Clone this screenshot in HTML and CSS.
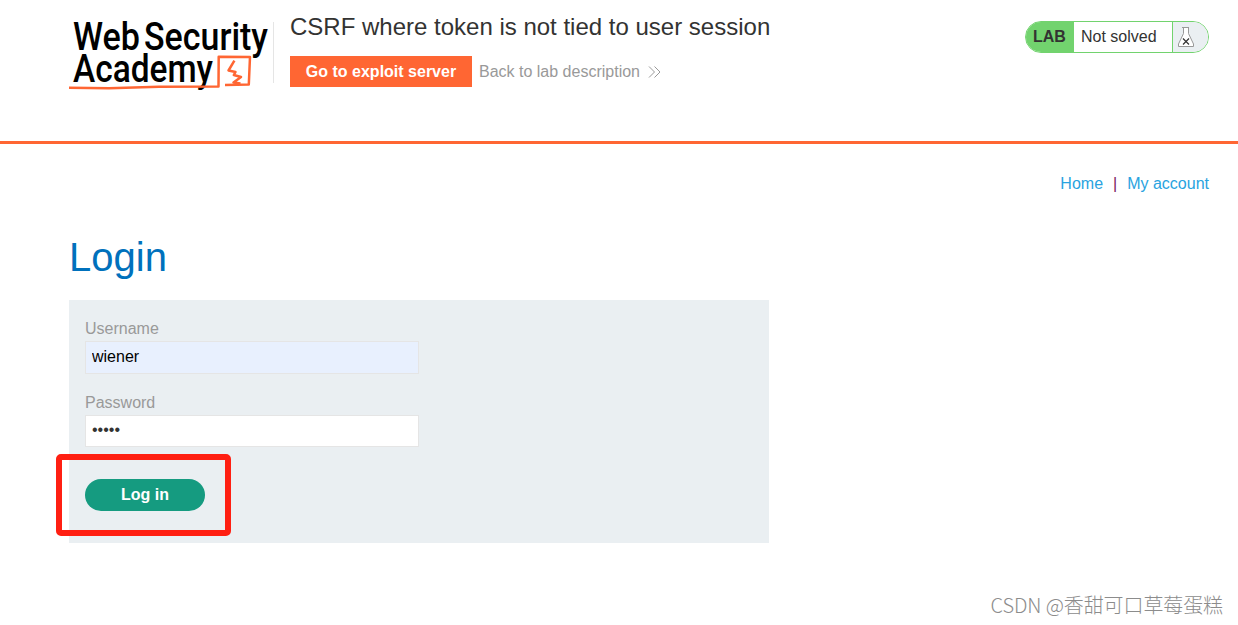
FILE: index.html
```html
<!DOCTYPE html>
<html lang="en">
<head>
    <meta charset="UTF-8">
    <meta name="viewport" content="width=device-width, initial-scale=1.0">
    <title>CSRF where token is not tied to user session</title>
    <link rel="stylesheet" href="styles.css">
</head>
<body>
    <header class="lab-header">
        <div class="container header-row">
            <svg class="logo" width="204" height="76" viewBox="0 0 204 76">
                <g class="logo-text">
                    <text x="4" y="35" textLength="67" lengthAdjust="spacingAndGlyphs">Web</text>
                    <text x="75" y="35" textLength="124" lengthAdjust="spacingAndGlyphs">Security</text>
                    <text x="4" y="67" textLength="140" lengthAdjust="spacingAndGlyphs">Academy</text>
                </g>
                <path class="logo-line" d="M0 72.700 L40 73.300 L90 71.800 L149.500 71.500 L149.700 41.800 L181 42 L179.800 69.500 L156 70"/>
                <path class="logo-bolt" d="M165.400 45.700 L159.500 55.500 L166.500 57 L164.800 60 L172 62 L164.500 67.500 L171.500 68.500"/>
            </svg>
            <div class="title-box">
                <h2>CSRF where token is not tied to user session</h2>
                <div class="links">
                    <a class="exploit-button">Go to exploit server</a>
                    <a class="back-link">Back to lab description
                        <svg width="13" height="12" viewBox="0 0 13 12">
                            <path d="M1 .5 L6.500 6 L1 11.500 M6.500 .5 L12 6 L6.500 11.500"/>
                        </svg>
                    </a>
                </div>
            </div>
            <div class="lab-status">
                <span class="lab-tag">LAB</span>
                <span class="lab-text">Not solved</span>
                <span class="lab-icon">
                    <svg width="18" height="22" viewBox="0 0 18 22">
                        <path class="flask" d="M5 1.500 H12 M6.500 1.500 V7.500 L1.500 18 V20.500 H16.500 V18 L11.500 7.500 V1.500"/>
                        <path class="cross" d="M6 12.500 L12 18.500 M12 12.500 L6 18.500"/>
                    </svg>
                </span>
            </div>
        </div>
    </header>

    <main class="container">
        <nav class="top-links">
            <a>Home</a><span>|</span><a>My account</a>
        </nav>
        <h1>Login</h1>
        <form class="login-form">
            <label for="username">Username</label>
            <input class="filled" type="text" id="username" value="wiener">
            <label for="password">Password</label>
            <input type="password" id="password" value="peter">
            <button type="button">Log in</button>
            <div class="highlight"></div>
        </form>
    </main>
    <div class="watermark">CSDN @香甜可口草莓蛋糕</div>
</body>
</html>
```
FILE: styles.css
```css
* {
    box-sizing: border-box;
}

body {
    margin: 0;
    height: 625px;
    position: relative;
    overflow: hidden;
    background-color: #fff;
    color: #333332;
    font-family: "Liberation Sans", Arial, sans-serif;
    font-size: 16px;
}

.container {
    width: 1140px;
    margin-left: 69px;
}

.lab-header {
    height: 144px;
    border-bottom: 3px solid #ff6633;
}

.header-row {
    display: flex;
    align-items: flex-start;
    padding-top: 15px;
}

.logo {
    overflow: visible;
    flex: none;
}

.logo-text {
    font-family: Roboto, sans-serif;
    font-size: 38px;
    font-weight: 500;
    fill: #000;
}

.logo-line,
.logo-bolt {
    fill: none;
    stroke: #ff6633;
    stroke-width: 2.5;
    stroke-linejoin: round;
}

.title-box {
    margin-top: 7px;
    margin-left: 0;
    padding-left: 16px;
    border-left: 1px solid #e5e5e5;
    height: 61px;
}

.title-box h2 {
    margin: -9px 0 15px;
    font-size: 24px;
    font-weight: normal;
    line-height: 28px;
    white-space: nowrap;
}

.links {
    display: flex;
    align-items: center;
}

.exploit-button {
    width: 182px;
    height: 31px;
    line-height: 31px;
    text-align: center;
    background-color: #ff6633;
    color: #fff;
    font-weight: bold;
}

.back-link {
    display: flex;
    align-items: center;
    gap: 8px;
    margin-left: 7px;
    color: #999;
}

.back-link svg {
    fill: none;
    stroke: #999;
}

.lab-status {
    display: flex;
    width: 184px;
    height: 32px;
    margin-top: 6px;
    margin-left: auto;
    border: 1px solid #72d36e;
    border-radius: 16px;
    overflow: hidden;
    line-height: 30px;
}

.lab-tag {
    width: 48px;
    padding-left: 7px;
    background-color: #72d36e;
    font-weight: bold;
}

.lab-text {
    width: 99px;
    padding-left: 7px;
    border-right: 1px solid #72d36e;
}

.lab-icon {
    display: flex;
    flex: 1;
    align-items: center;
    padding-left: 4px;
    background-color: #eaeff2;
}

.flask {
    fill: #fff;
    stroke: #999;
}

.cross {
    fill: none;
    stroke: #333;
    stroke-width: 1.2;
}

.top-links {
    display: flex;
    justify-content: flex-end;
    padding-top: 31px;
    line-height: 18px;
    color: #29a3e0;
}

.top-links span {
    margin: 0 10px;
    color: #7a1a5c;
}

h1 {
    margin: 42px 0 20px;
    font-size: 40px;
    font-weight: normal;
    line-height: 45px;
    color: #0071bc;
}

.login-form {
    position: relative;
    width: 700px;
    height: 243px;
    padding: 16px;
    background-color: #eaeff2;
}

.login-form label {
    display: block;
    height: 25px;
    line-height: 25px;
    color: #999;
}

.login-form input {
    display: block;
    width: 334px;
    height: 32px;
    margin-bottom: 16px;
    padding: 0 6px 2px;
    border: 1px solid #e5e5e5;
    background-color: #fff;
    color: #333332;
    font-family: inherit;
    font-size: 16px;
}

.login-form .filled {
    height: 33px;
    background-color: #e8f0fe;
    color: #000;
}

.login-form button {
    width: 120px;
    height: 32px;
    margin-top: 32px;
    padding: 0 0 1px;
    border: none;
    border-radius: 16px;
    background-color: #159b80;
    color: #fff;
    font-family: inherit;
    font-size: 16px;
    font-weight: bold;
}

.login-form #password {
    margin-bottom: 0;
}

/* red frame around the log in button */
.highlight {
    position: absolute;
    left: -13px;
    top: 154px;
    width: 175px;
    height: 82px;
    border: 6px solid #ff1f12;
    border-radius: 5px;
}

.watermark {
    position: absolute;
    right: 15px;
    bottom: 5px;
    font-family: "Noto Sans CJK SC", sans-serif;
    font-size: 20px;
    line-height: 30px;
    font-weight: 300;
    letter-spacing: -0.1px;
    color: #8c8c8c;
}
```
